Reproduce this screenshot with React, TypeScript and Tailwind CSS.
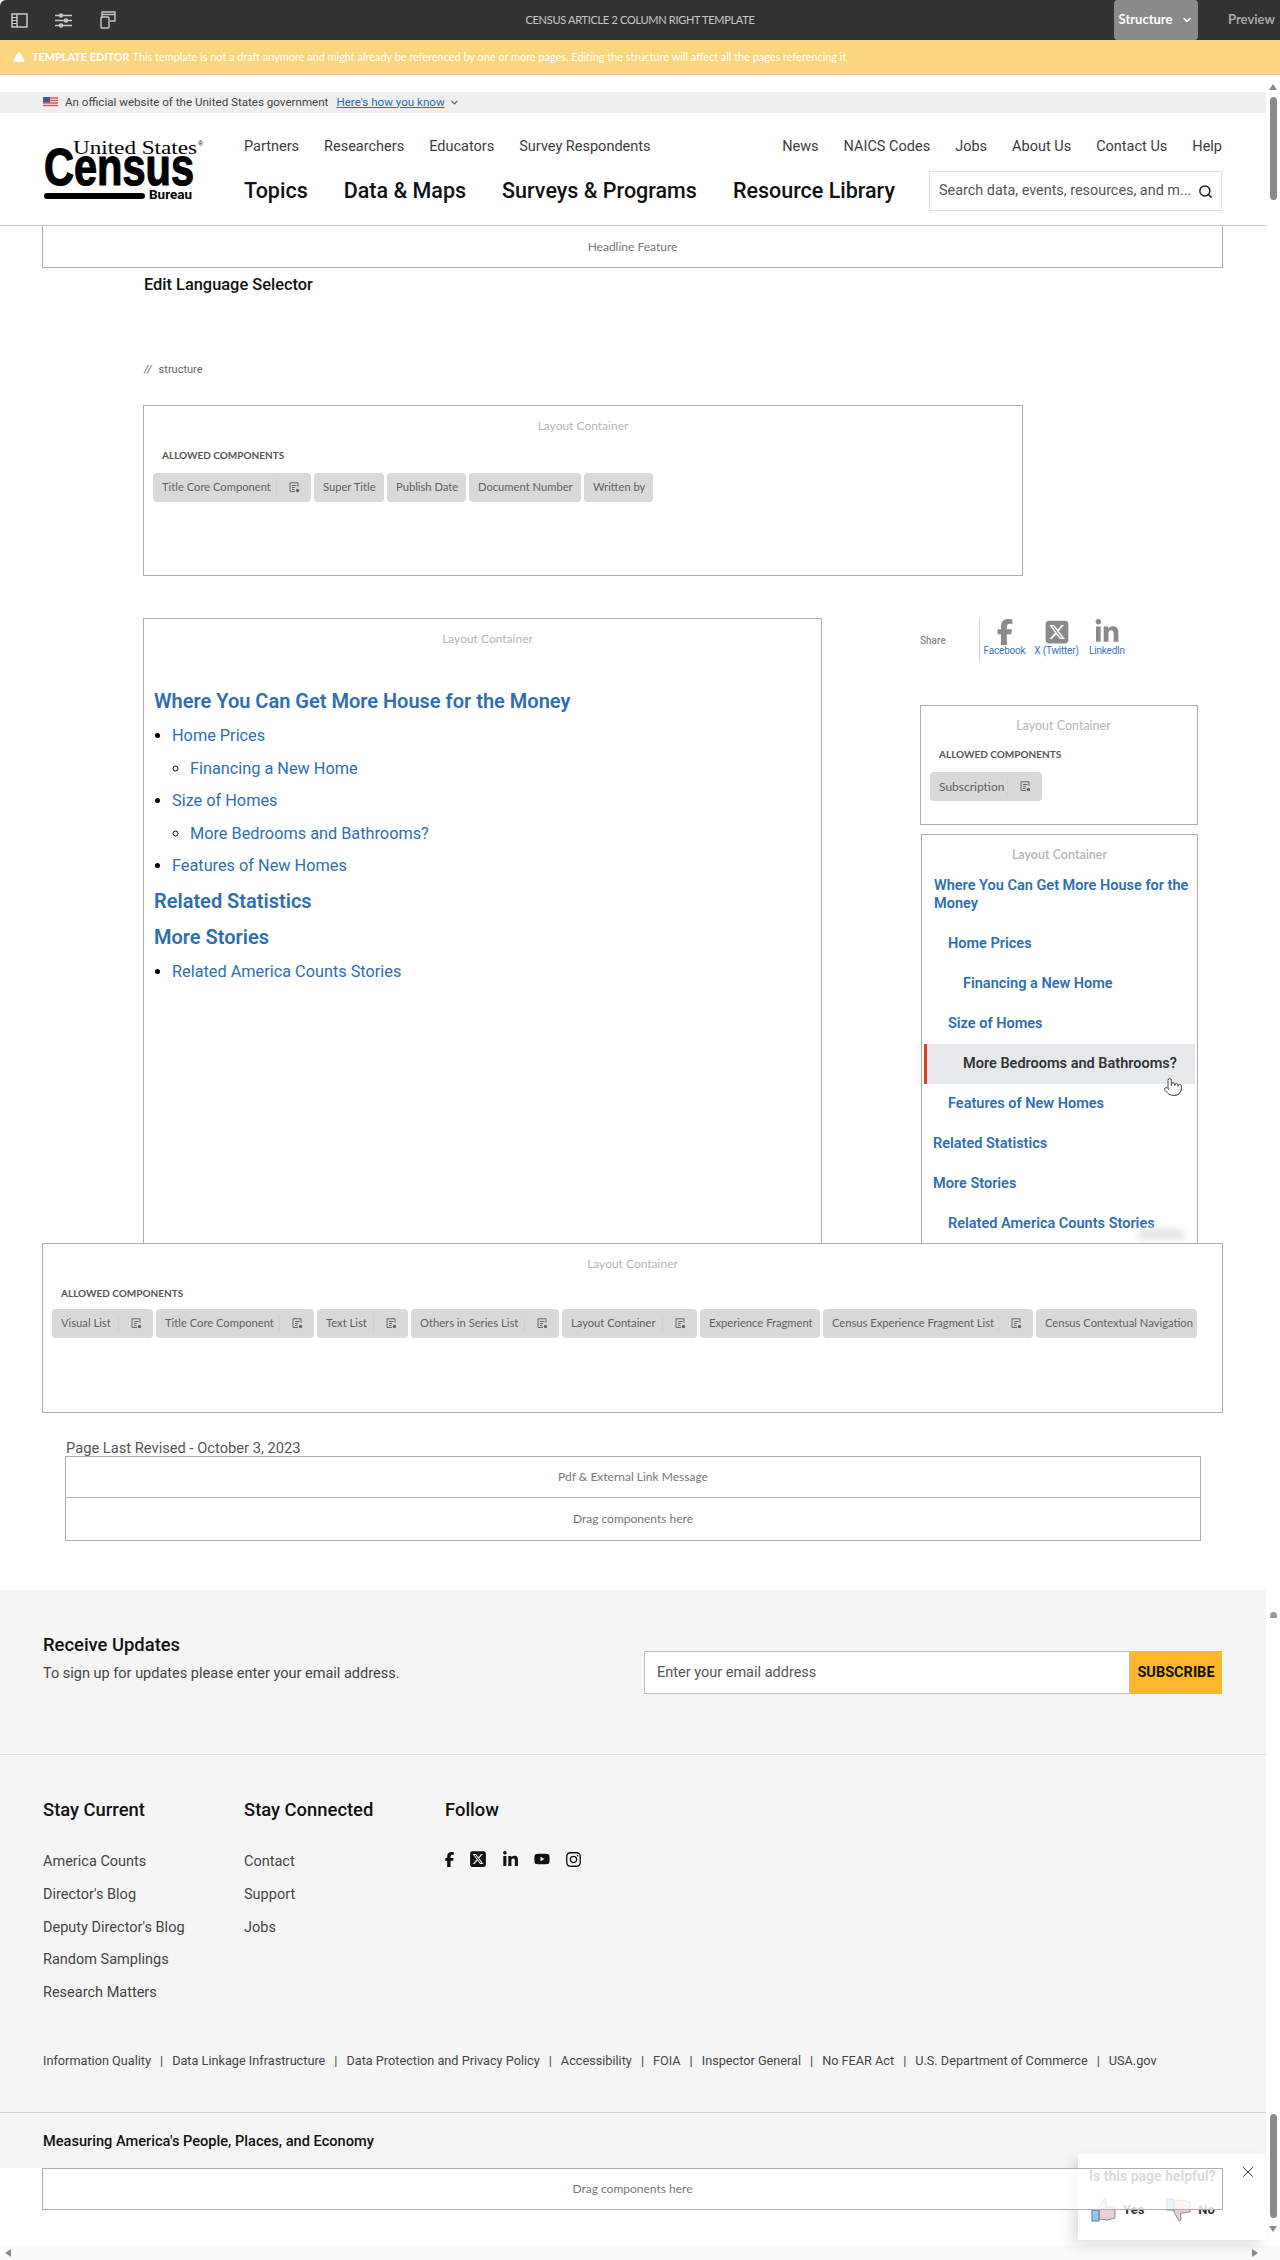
import { ChevronDown, Pointer, Search, TriangleAlert, X } from "lucide-react";
import {
  FaFacebookF,
  FaInstagram,
  FaLinkedinIn,
  FaSquareXTwitter,
  FaYoutube,
} from "react-icons/fa6";

type Chip = { label: string; w: string; icon?: boolean };

const titleChips: Chip[] = [
  { label: "Title Core Component", w: "w-[158px]", icon: true },
  { label: "Super Title", w: "w-[70px]" },
  { label: "Publish Date", w: "w-[79px]" },
  { label: "Document Number", w: "w-[112px]" },
  { label: "Written by", w: "w-[69px]" },
];

const wideChips: Chip[] = [
  { label: "Visual List", w: "w-[101px]", icon: true },
  { label: "Title Core Component", w: "w-[158px]", icon: true },
  { label: "Text List", w: "w-[91px]", icon: true },
  { label: "Others in Series List", w: "w-[148px]", icon: true },
  { label: "Layout Container", w: "w-[135px]", icon: true },
  { label: "Experience Fragment", w: "w-[120px]" },
  { label: "Census Experience Fragment List", w: "w-[210px]", icon: true },
  { label: "Census Contextual Navigation", w: "w-[161px]" },
];

const tocRows = [
  { label: "Home Prices", pad: "pl-[26px]" },
  { label: "Financing a New Home", pad: "pl-[41px]" },
  { label: "Size of Homes", pad: "pl-[26px]" },
  { label: "More Bedrooms and Bathrooms?", pad: "pl-[36px] mx-[2px] border-l-[3px] border-[#d8401f] bg-[#e5e9ec] text-[#333]" },
  { label: "Features of New Homes", pad: "pl-[26px]" },
  { label: "Related Statistics", pad: "pl-[11px]" },
  { label: "More Stories", pad: "pl-[11px]" },
  { label: "Related America Counts Stories", pad: "pl-[26px]" },
];

const footerLinks = [
  "Information Quality",
  "Data Linkage Infrastructure",
  "Data Protection and Privacy Policy",
  "Accessibility",
  "FOIA",
  "Inspector General",
  "No FEAR Act",
  "U.S. Department of Commerce",
  "USA.gov",
];

function ListGearIcon() {
  return (
    <svg width="11" height="11" viewBox="0 0 11 11" fill="none" stroke="#666" strokeWidth="1">
      <path d="M1 .8h8M1 .8v8.7h5M9 .8v4M3 3.5h4.5M3 5.5h3M3 7.5h2.5" />
      <circle cx="8.5" cy="8.5" r="1.7" fill="#666" stroke="none" />
    </svg>
  );
}

function ComponentChip({ chip, large }: { chip: Chip; large?: boolean }) {
  return (
    <div
      className={`${chip.w} ${large ? "text-[12px]" : "text-[11.2px]"} h-[29px] shrink-0 rounded-[4px] bg-[#d9d9d9] pl-[9px] flex items-center text-[#5f5f5f] [font-family:Lato,sans-serif] whitespace-nowrap`}
    >
      <span className="flex-1">{chip.label}</span>
      {chip.icon && (
        <span className="w-[35px] h-[17px] border-l border-[#d0d0d0] flex items-center justify-center">
          <ListGearIcon />
        </span>
      )}
    </div>
  );
}

function AllowedHeading() {
  return (
    <p className="text-[10px] font-bold text-[#555] [font-family:Lato,sans-serif] leading-[14px]">
      ALLOWED COMPONENTS
    </p>
  );
}

function ContainerLabel({ large }: { large?: boolean }) {
  return (
    <p className={`${large ? "text-[12.5px]" : "text-[12px]"} text-center leading-[16px] text-[#b5b5b5] [font-family:Lato,sans-serif]`}>
      Layout Container
    </p>
  );
}

function DropBox({ label, className = "" }: { label: string; className?: string }) {
  return (
    <div
      className={`h-[43px] border border-[#acacac] flex items-center justify-center text-[12px] text-[#777] [font-family:Lato,sans-serif] ${className}`}
    >
      {label}
    </div>
  );
}

function ShareLink({ label, icon, w }: { label: string; icon: React.ReactNode; w: string }) {
  return (
    <div className={`${w} flex flex-col items-center`}>
      <div className="h-[27px] flex items-center text-[#8a8a8a] text-[26px]">{icon}</div>
      <span className="text-[10px] leading-[12px] tracking-[-0.2px] text-[#3a74b4] whitespace-nowrap">{label}</span>
    </div>
  );
}

function ThumbIcon({ down }: { down?: boolean }) {
  return (
    <svg width="26" height="24" viewBox="0 0 26 24" className={down ? "rotate-180 -scale-x-100" : ""}>
      <path
        d="M8 10 L13 1 L15 2 L14.5 9 L24 10 L24 20 L16 22 L8 21 Z"
        fill="#eccfd2"
        stroke="#8a8a9a"
        strokeWidth="1"
      />
      <rect x="1" y="12" width="7" height="11" fill="#9cc4e6" stroke="#4a7cb0" strokeWidth="1" />
    </svg>
  );
}

export default function App() {
  return (
    <div className="h-[2260px] w-[1280px] overflow-hidden bg-white text-[#333] [font-family:Roboto,sans-serif]">
      {/* Editor bars */}
      <div className="h-[40px] rounded-tl-[6px] bg-[#323232] flex items-center text-[#c8c8c8]">
        <div className="w-[128px] flex items-center gap-[27px] pl-[11px]">
          <svg width="17" height="15" viewBox="0 0 17 15" fill="none" stroke="#c8c8c8" strokeWidth="1.5">
            <rect x="1" y="1" width="15" height="13" />
            <path d="M6 1v13" />
            <path d="M1 4.5h5M1 7.5h5M1 10.5h5" strokeWidth="1" />
          </svg>
          <svg width="17" height="15" viewBox="0 0 17 15" fill="none" stroke="#c8c8c8" strokeWidth="1.3">
            <path d="M0 2.5h17M0 7.5h17M0 12.5h17" />
            <circle cx="6" cy="2.5" r="1.6" fill="#c8c8c8" />
            <circle cx="11" cy="7.5" r="1.6" fill="#c8c8c8" />
            <circle cx="6" cy="12.5" r="1.6" fill="#c8c8c8" />
          </svg>
          <svg width="17" height="18" viewBox="0 0 17 18" fill="none" stroke="#c8c8c8" strokeWidth="1.4">
            <path d="M3 7V1h13v9h-5" />
            <rect x="2" y="6" width="8" height="11" rx="1" />
            <path d="M3 3.5h13" />
          </svg>
        </div>
        <div className="flex-1 pl-[38px] text-center text-[11px] tracking-[-0.3px] [font-family:Lato,sans-serif]">
          CENSUS ARTICLE 2 COLUMN RIGHT TEMPLATE
        </div>
        <div className="w-[84px] h-[40px] rounded-[4px] bg-[#8a8a8a] flex items-center justify-center gap-[9px] text-white font-bold text-[13px] [font-family:Lato,sans-serif]">
          Structure
          <ChevronDown size={12} strokeWidth={3} />
        </div>
        <div className="w-[82px] pl-[30px] text-[13px] font-bold text-[#aaa] [font-family:Lato,sans-serif]">
          Preview
        </div>
      </div>
      <div className="h-[35px] bg-[#fbd67e] border-b border-[#dcc79a] flex items-center pl-[13px] text-[10.9px] text-white [font-family:Lato,sans-serif] whitespace-nowrap">
        <TriangleAlert size={12} fill="white" className="mr-[7px]" />
        <b className="mr-[3px]">TEMPLATE EDITOR</b>
        This template is not a draft anymore and might already be referenced by one or more pages. Editing the structure will affect all the pages referencing it
      </div>

      <div className="flex h-[2170px]">
        <main className="relative w-[1266px] shrink-0">
          {/* Gov banner */}
          <div className="mt-[17px] h-[21px] bg-[#efefef] pl-[43px] flex items-center text-[11.6px] text-[#444]">
            <svg width="15" height="11" viewBox="0 0 15 11" className="mr-[7px]">
              <rect width="15" height="11" fill="#f4f4f4" />
              <path d="M0 1h15M0 3.5h15M0 6h15M0 8.5h15" stroke="#d9574f" strokeWidth="1.4" />
              <rect width="7" height="5.5" fill="#3b5b9a" />
            </svg>
            An official website of the United States government
            <span className="ml-[8px] text-[#2a6db0] underline">Here's how you know</span>
            <ChevronDown size={11} strokeWidth={3} className="ml-[4px] text-[#2a6db0]" />
          </div>

          {/* Header */}
          <header className="h-[113px] border-b border-[#c9c9c9] pl-[43px] pr-[44px] flex">
            <svg width="161" height="62" viewBox="0 0 161 62" className="mt-[26px] shrink-0 overflow-visible" role="img" aria-label="United States Census Bureau">
              <text x="30" y="15" fontFamily="Liberation Serif" fontSize="19" textLength="124" lengthAdjust="spacingAndGlyphs" fill="#000">
                United States
              </text>
              <text x="155" y="7" fontFamily="Liberation Sans" fontSize="7" fill="#000">®</text>
              <text x="1" y="46" fontFamily="Liberation Sans" fontWeight="700" fontSize="51" textLength="150" lengthAdjust="spacingAndGlyphs" fill="#000" stroke="#000" strokeWidth="1.2">
                Census
              </text>
              <rect x="1" y="54" width="101" height="6" rx="3" fill="#000" />
              <text x="106" y="60" fontFamily="Roboto" fontWeight="700" fontSize="13.5" textLength="43" lengthAdjust="spacingAndGlyphs" fill="#000">
                Bureau
              </text>
            </svg>
            <div className="ml-[40px] flex-1">
              <div className="mt-[25px] flex justify-between text-[14.5px] leading-[18px] text-[#3c3c3c]">
                <div className="flex gap-[25px]">
                  <span>Partners</span>
                  <span>Researchers</span>
                  <span>Educators</span>
                  <span>Survey Respondents</span>
                </div>
                <div className="flex gap-[25px]">
                  <span>News</span>
                  <span>NAICS Codes</span>
                  <span>Jobs</span>
                  <span>About Us</span>
                  <span>Contact Us</span>
                  <span>Help</span>
                </div>
              </div>
              <div className="mt-[15px] flex justify-between items-center">
                <div className="flex gap-[36px] text-[21.5px] font-medium text-[#111]">
                  <span>Topics</span>
                  <span>Data &amp; Maps</span>
                  <span>Surveys &amp; Programs</span>
                  <span>Resource Library</span>
                </div>
                <div className="w-[293px] h-[40px] border border-[#dedede] pl-[9px] pr-[8px] flex items-center justify-between text-[14.4px] text-[#555] whitespace-nowrap">
                  <span>Search data, events, resources, and m...</span>
                  <Search size={15} strokeWidth={2.4} className="text-[#222]" />
                </div>
              </div>
            </div>
          </header>

          <DropBox label="Headline Feature" className="ml-[42px] w-[1181px] !h-[42px] border-t-0" />

          <p className="ml-[144px] mt-[8px] h-[18px] text-[16.4px] leading-[18px] font-medium text-[#111]">
            Edit Language Selector
          </p>
          <p className="ml-[144px] mt-[68px] h-[16px] text-[11px] leading-[16px] text-[#666]">
            <i className="mr-[7px]">//</i>structure
          </p>

          {/* Title container */}
          <section className="ml-[143px] mt-[27px] w-[880px] h-[171px] border border-[#acacac] pt-[12px] px-[9px]">
            <ContainerLabel />
            <div className="mt-[14px] pl-[9px]">
              <AllowedHeading />
            </div>
            <div className="mt-[11px] flex gap-[3px]">
              {titleChips.map((chip) => (
                <ComponentChip key={chip.label} chip={chip} />
              ))}
            </div>
          </section>

          {/* Article row */}
          <div className="mt-[42px] h-[625px] flex">
            <section className="ml-[143px] w-[679px] h-[625px] border border-[#acacac] border-b-0 pt-[12px] pl-[10px] text-[#2e6eb0]">
              <ContainerLabel />
              <h2 className="mt-[36px] h-[36px] flex items-center text-[20px] font-semibold">
                Where You Can Get More House for the Money
              </h2>
              <ul className="mt-[1px] list-disc pl-[18px] text-[16.3px] leading-[32.5px] marker:text-black">
                <li>Home Prices</li>
                <ul className="list-[circle] pl-[18px] marker:text-black">
                  <li>Financing a New Home</li>
                </ul>
                <li>Size of Homes</li>
                <ul className="list-[circle] pl-[18px] marker:text-black">
                  <li>More Bedrooms and Bathrooms?</li>
                </ul>
                <li>Features of New Homes</li>
              </ul>
              <h2 className="h-[36px] flex items-center text-[20px] font-semibold">Related Statistics</h2>
              <h2 className="h-[36px] flex items-center text-[20px] font-semibold">More Stories</h2>
              <ul className="mt-[1px] list-disc pl-[18px] text-[16.3px] leading-[32.5px] marker:text-black">
                <li>Related America Counts Stories</li>
              </ul>
            </section>

            <aside className="ml-[98px] w-[278px]">
              <div className="h-[87px] flex">
                <span className="mt-[16px] w-[59px] text-[10px] leading-[14px] text-[#8a8a8a] font-medium">Share</span>
                <div className="h-[44px] border-l border-[#d5d5d5] pl-[4px] flex">
                  <ShareLink label="Facebook" w="w-[41px]" icon={<FaFacebookF />} />
                  <div className="ml-[10px]">
                    <ShareLink label="X (Twitter)" w="w-[43px]" icon={<FaSquareXTwitter />} />
                  </div>
                  <div className="ml-[6px]">
                    <ShareLink label="LinkedIn" w="w-[46px]" icon={<FaLinkedinIn />} />
                  </div>
                </div>
              </div>
              <section className="h-[120px] border border-[#acacac] pt-[12px] pl-[9px]">
                <ContainerLabel large />
                <div className="mt-[13px] pl-[9px]">
                  <AllowedHeading />
                </div>
                <div className="mt-[11px]">
                  <ComponentChip large chip={{ label: "Subscription", w: "w-[112px]", icon: true }} />
                </div>
              </section>
              <section className="relative mt-[9px] ml-[1px] h-[410px] border border-[#acacac] pt-[12px] text-[14.5px] font-semibold text-[#2e6eb0]">
                <ContainerLabel large />
                <p className="mt-[14px] pl-[12px] pr-[4px] leading-[18px]">Where You Can Get More House for the Money</p>
                <div className="mt-[11px]">
                  {tocRows.map((row) => (
                    <div key={row.label} className={`${row.pad} h-[40px] flex items-center`}>
                      {row.label}
                    </div>
                  ))}
                </div>
                <Pointer
                  size={20}
                  fill="white"
                  strokeWidth={1.2}
                  className="absolute left-[241px] top-[242px] text-[#444]"
                />
                <div className="absolute left-[215px] top-[394px] w-[48px] h-[10px] rounded-t-full bg-[#e2e2e2] blur-[3px]" />
              </section>
            </aside>
          </div>

          {/* Wide container */}
          <section className="ml-[42px] w-[1181px] h-[170px] border border-[#acacac] pt-[12px] px-[9px] bg-white relative">
            <ContainerLabel />
            <div className="mt-[14px] pl-[9px]">
              <AllowedHeading />
            </div>
            <div className="mt-[9px] flex gap-[3px]">
              {wideChips.map((chip) => (
                <ComponentChip key={chip.label} chip={chip} />
              ))}
            </div>
          </section>

          <p className="ml-[66px] mt-[25px] h-[18px] text-[14.7px] leading-[20px] text-[#555]">Page Last Revised - October 3, 2023</p>
          <DropBox label="Pdf & External Link Message" className="ml-[65px] w-[1136px] !h-[42px]" />
          <DropBox label="Drag components here" className="ml-[65px] w-[1136px] border-t-0" />

          {/* Footer */}
          <footer className="mt-[49px] h-[578px] bg-[#f5f5f5]">
            <div className="h-[165px] border-b border-[#dfdfdf] pl-[43px] pr-[44px] flex justify-between pt-[42px]">
              <div>
                <h3 className="text-[18.4px] leading-[26px] font-medium text-[#111]">Receive Updates</h3>
                <p className="mt-[6px] text-[14.5px] leading-[20px] text-[#444]">To sign up for updates please enter your email address.</p>
              </div>
              <div className="mt-[19px] flex h-[43px]">
                <div className="w-[486px] border border-[#bdbdbd] bg-white pl-[12px] flex items-center text-[14.5px] text-[#555]">
                  Enter your email address
                </div>
                <div className="w-[92px] bg-[#fdb82a] flex items-center justify-center text-[14.5px] font-bold text-[#111]">
                  SUBSCRIBE
                </div>
              </div>
            </div>

            <div className="h-[358px] border-b border-[#cfcfcf] pl-[43px] pt-[42px]">
              <div className="flex h-[248px]">
                <div className="w-[201px]">
                  <h3 className="text-[18.4px] leading-[26px] font-medium text-[#111]">Stay Current</h3>
                  <div className="mt-[23px] text-[14.5px] leading-[32.8px] text-[#444]">
                    <p>America Counts</p>
                    <p>Director's Blog</p>
                    <p>Deputy Director's Blog</p>
                    <p>Random Samplings</p>
                    <p>Research Matters</p>
                  </div>
                </div>
                <div className="w-[201px]">
                  <h3 className="text-[18.4px] leading-[26px] font-medium text-[#111]">Stay Connected</h3>
                  <div className="mt-[23px] text-[14.5px] leading-[32.8px] text-[#444]">
                    <p>Contact</p>
                    <p>Support</p>
                    <p>Jobs</p>
                  </div>
                </div>
                <div>
                  <h3 className="text-[18.4px] leading-[26px] font-medium text-[#111]">Follow</h3>
                  <div className="mt-[27px] flex items-center gap-[15px] text-[15px] text-[#111]">
                    <FaFacebookF size={15} className="-ml-[3px]" />
                    <FaSquareXTwitter size={18} className="-ml-[3px]" />
                    <FaLinkedinIn size={17} />
                    <FaYoutube size={16} />
                    <FaInstagram size={17} />
                  </div>
                </div>
              </div>
              <div className="mt-[6px] flex items-center text-[12.7px] leading-[20px] text-[#444]">
                {footerLinks.map((link, i) => (
                  <span key={link} className="flex items-center">
                    {i > 0 && <span className="mx-[9px]">|</span>}
                    {link}
                  </span>
                ))}
              </div>
            </div>

            <div className="h-[54px] pl-[43px] pt-[3px] flex items-center text-[14.6px] font-medium text-[#111]">
              Measuring America's People, Places, and Economy
            </div>
          </footer>

          <DropBox label="Drag components here" className="relative z-20 ml-[42px] w-[1181px] !h-[42px] bg-white/80" />

          {/* Feedback popup, sits under the drop box */}
          <div className="absolute z-10 left-[1078px] bottom-[5px] w-[188px] h-[86px] bg-white shadow-[-6px_6px_12px_rgba(0,0,0,0.12)]">
            <p className="absolute left-[11px] top-[12px] text-[14px] font-bold text-[#444]">Is this page helpful?</p>
            <X size={18} strokeWidth={1.3} className="absolute left-[161px] top-[9px] text-[#333]" />
            <div className="absolute left-[13px] top-[44px] flex items-center gap-[6px] text-[13px] font-bold text-[#333]">
              <ThumbIcon />
              <span>Yes</span>
              <span className="ml-[16px]"><ThumbIcon down /></span>
              <span>No</span>
            </div>
          </div>
        </main>

        {/* Scrollbar */}
        <aside className="w-[14px] shrink-0 flex flex-col items-center text-[#8a8a8a]">
          <div className="mt-[9px] h-0 w-0 border-x-[4px] border-b-[6px] border-x-transparent border-b-[#8a8a8a]" />
          <div className="mt-[7px] w-[7px] h-[103px] rounded-full bg-[#8a8a8a]" />
          <div className="mt-[1412px] w-[7px] h-[6px] rounded-t-full bg-[#999]" />
          <div className="mt-[496px] w-[7px] h-[104px] rounded-full bg-[#8a8a8a]" />
          <div className="mt-[8px] h-0 w-0 border-x-[4px] border-t-[6px] border-x-transparent border-t-[#8a8a8a]" />
        </aside>
      </div>

      {/* Horizontal scrollbar */}
      <div className="h-[15px] bg-[#fafafa] flex items-center justify-between pl-[5px] pr-[22px]">
        <div className="h-0 w-0 border-y-[4px] border-r-[6px] border-y-transparent border-r-[#8a8a8a]" />
        <div className="h-0 w-0 border-y-[4px] border-l-[6px] border-y-transparent border-l-[#8a8a8a]" />
      </div>
    </div>
  );
}
